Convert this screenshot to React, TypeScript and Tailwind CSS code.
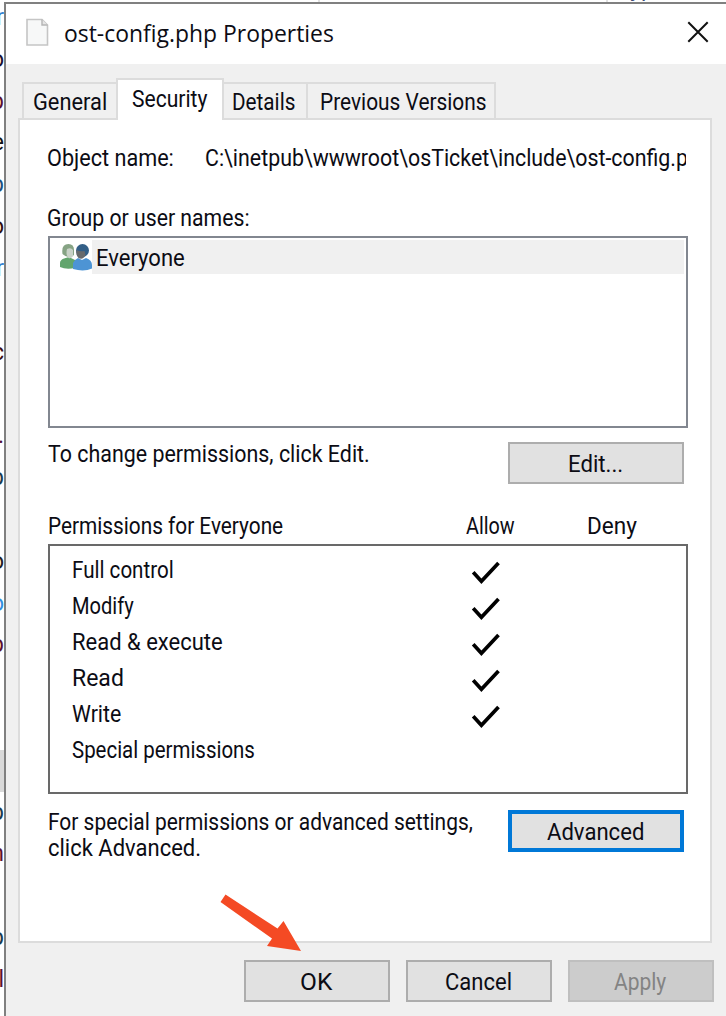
import { useLayoutEffect, useRef, useState } from "react";

type LabelProps = { text: string; width: number; className?: string };

/* Single-line label condensed or widened to an exact width. */
function Label({ text, width, className = "" }: LabelProps) {
  const ref = useRef<HTMLSpanElement>(null);
  const [scale, setScale] = useState(1);
  useLayoutEffect(() => {
    if (ref.current) setScale(width / ref.current.offsetWidth);
  }, [text, width]);
  return (
    <span className={`block shrink-0 ${className}`} style={{ width }}>
      <span
        ref={ref}
        className="inline-block origin-left whitespace-nowrap align-top"
        style={{ transform: `scaleX(${scale})` }}
      >
        {text}
      </span>
    </span>
  );
}

const fragments: { t: string; c: string }[] = [
  { t: "r", c: "text-[#2f7fd0]" },
  { t: "o", c: "text-[#1a1030]" },
  { t: "p", c: "text-[#5a1030]" },
  { t: "e", c: "text-[#111111]" },
  { t: "p", c: "text-[#1a4f80]" },
  { t: "o", c: "text-[#301010]" },
  { t: "r", c: "text-[#2f7fd0]" },
  { t: "", c: "" },
  { t: "c", c: "text-[#3a0a10]" },
  { t: "", c: "" },
  { t: ".", c: "text-[#50103a]" },
  { t: "p", c: "text-[#1a3a50]" },
  { t: "", c: "" },
  { t: "o", c: "text-[#222222]" },
  { t: "o", c: "text-[#2f8fe0]" },
  { t: "p", c: "text-[#5a1030]" },
  { t: "", c: "" },
  { t: "", c: "" },
  { t: "", c: "bg-[#d9d9d9]" },
  { t: "p", c: "text-[#1a3a50]" },
  { t: "n", c: "text-[#5a1030]" },
  { t: "", c: "" },
  { t: "p", c: "text-[#1a3a50]" },
  { t: "sl", c: "text-[#5a1030]" },
];

const permissions = [
  { name: "Full control", w: 102, allow: true },
  { name: "Modify", w: 62, allow: true },
  { name: "Read & execute", w: 151, allow: true },
  { name: "Read", w: 52, allow: true },
  { name: "Write", w: 49, allow: true },
  { name: "Special permissions", w: 183, allow: false },
];

function Check() {
  return (
    <svg className="ml-[398px] h-[36px] w-[32px] shrink-0" viewBox="0 0 32 36" fill="none">
      <path d="M3.2 14.3 L11.4 23.2 L28.5 5" stroke="#000" strokeWidth="3.7" />
    </svg>
  );
}

function Users() {
  return (
    <svg className="h-[30px] w-[34px] shrink-0" viewBox="0 0 34 30">
      <path d="M2 26V21Q2 18 6 16.5L11 15L17 18V26Q8 28 2 25Z" fill="#62a56d" />
      <path d="M4.5 12Q3 2 10.5 2Q16 2 16 8V13Q11 18 4.5 12Z" fill="#86a384" />
      <path d="M9 7Q13 5 15 8V14Q13 17 10.5 16Q7.500 13 9 7Z" fill="#c9d2c8" />
      <path d="M15 27V21Q16 18 20 16L24 18L28 16Q34 18 34 23V26.500Q26 30 15 27Z" fill="#4d94d4" />
      <ellipse cx="24.500" cy="8.500" rx="6.500" ry="6.500" fill="#335f87" />
      <path d="M18.500 8Q22 10 26.500 9L27.500 13Q25 18.500 20.500 16Q17.500 13 18.500 8Z" fill="#686a6c" />
    </svg>
  );
}

const button = "flex h-[42px] items-start justify-center border-2";

export default function App() {
  return (
    <div className="flex h-[1016px] w-[726px] flex-col overflow-hidden bg-white font-['Roboto',sans-serif] text-[23px] leading-[26px] text-[#0c0c14]">
      <div className="flex h-[2px] shrink-0 overflow-hidden">
        <div className="ml-[318px] h-full w-[2px] bg-[#e2e2e2]" />
        <div className="ml-[286px] h-full w-[2px] bg-[#e2e2e2]" />
        <div className="-mt-[24px] ml-[22px] h-[26px] text-[#3c4c78]">yp</div>
      </div>
      <div className="flex min-h-0 flex-1">
        <div className="flex w-[4px] shrink-0 flex-col overflow-hidden">
          <div className="-mt-[5px] flex flex-col">
            {fragments.map((f, i) => (
              <div key={i} className={`flex h-[41.84px] w-[4px] shrink-0 items-center justify-end ${f.c}`}>
                {f.t}
              </div>
            ))}
          </div>
        </div>
        <div className="flex w-[722px] shrink-0 flex-col border-l-2 border-t-2 border-[#808080] bg-[#f0f0f0]">
          <header className="flex h-[60px] shrink-0 items-start bg-white">
            <svg className="ml-[19px] mt-[14px] h-[30px] w-[26px]" viewBox="0 0 26 30">
              <path d="M2 1.5H17L22.5 7V27H2Z" fill="#f7f8f8" stroke="#c5c5c5" strokeWidth="1.6" />
              <path d="M17 1.5V7H22.5" fill="#e5e5e5" stroke="#b5b5b5" strokeWidth="1.4" />
            </svg>
            <Label
              text="ost-config.php Properties"
              width={270}
              className="ml-[13px] mt-[16px] font-['Open_Sans',sans-serif] text-[23.5px]"
            />
            <svg className="ml-[353px] mt-[17px] h-[22px] w-[22px]" viewBox="0 0 22 22">
              <path d="M1.3 1.3L20.7 20.7M20.7 1.3L1.3 20.7" stroke="#111" strokeWidth="2" />
            </svg>
          </header>

          <nav className="flex h-[54px] shrink-0 items-end pl-[16px]">
            <div className="flex h-[36px] w-[94px] border-l-2 border-t-2 border-[#dcdcdc] pl-[9px] pt-[6px]">
              <Label text="General" width={74} />
            </div>
            <div className="z-10 -mb-[2px] flex h-[42px] w-[108px] border-x-2 border-t-2 border-[#dcdcdc] bg-white pl-[14px] pt-[7px]">
              <Label text="Security" width={75} />
            </div>
            <div className="flex h-[36px] w-[82px] border-t-2 border-[#dcdcdc] pl-[8px] pt-[6px]">
              <Label text="Details" width={63} />
            </div>
            <div className="flex h-[36px] w-[190px] border-x-2 border-t-2 border-[#dcdcdc] pl-[12px] pt-[6px]">
              <Label text="Previous Versions" width={167} />
            </div>
          </nav>

          <main className="ml-[12px] flex h-[825px] w-[694px] shrink-0 flex-col border-2 border-[#dcdcdc] bg-white pl-[28px] pt-[26px]">
            <div className="flex h-[26px] shrink-0">
              <Label text="Object name:" width={127} className="-ml-[1px]" />
              <div className="ml-[31px] flex w-[481px] overflow-hidden">
                <Label text="C:\inetpub\wwwroot\osTicket\include\ost-config.php" width={507} />
              </div>
            </div>

            <Label text="Group or user names:" width={203} className="-ml-[1px] mt-[34px]" />
            <div className="mt-[4px] h-[192px] w-[640px] shrink-0 border-2 border-[#828790] p-[2px]">
              <div className="flex h-[34px]">
                <div className="flex w-[40px] items-center justify-end">
                  <Users />
                </div>
                <div className="flex flex-1 bg-[#f0f0f0] pl-[4px] pt-[6px]">
                  <Label text="Everyone" width={89} />
                </div>
              </div>
            </div>

            <div className="mt-[14px] flex h-[42px] w-[636px] shrink-0 justify-between">
              <Label text="To change permissions, click Edit." width={322} />
              <div className={`${button} w-[176px] border-[#adadad] bg-[#e1e1e1] pt-[8px]`}>
                <Label text="Edit..." width={55} className="-ml-[2px]" />
              </div>
            </div>

            <div className="mt-[30px] flex h-[26px] shrink-0">
              <Label text="Permissions for Everyone" width={235} />
              <Label text="Allow" width={49} className="ml-[183px]" />
              <Label text="Deny" width={50} className="ml-[72px]" />
            </div>
            <div className="mt-[4px] h-[250px] w-[640px] shrink-0 border-2 border-[#696969] pl-[22px] pt-[12px]">
              {permissions.map((p) => (
                <div key={p.name} className="flex h-[36px]">
                  <div className="w-0">
                    <Label text={p.name} width={p.w} />
                  </div>
                  {p.allow && <Check />}
                </div>
              ))}
            </div>

            <div className="mt-[16px] flex w-[636px] justify-between">
              <div>
                <Label text="For special permissions or advanced settings," width={425} />
                <Label text="click Advanced." width={153} />
              </div>
              <div className={`${button} w-[176px] border-[4px] border-[#0078d7] bg-[#e1e1e1] pt-[6px]`}>
                <Label text="Advanced" width={97} className="-ml-[2px]" />
              </div>
            </div>
          </main>

          <footer className="relative flex gap-[16px] pl-[238px] pt-[17px]">
            <svg className="absolute left-[213px] top-[-50px] h-[62px] w-[86px]" viewBox="0 0 86 62">
              <path d="M6.5 1.5L58.5 35.5L64.5 28L82 58L48 53L53 45.5L1.5 9Z" fill="#f44a24" />
            </svg>
            <div className={`${button} w-[146px] border-[#adadad] bg-[#e1e1e1] pt-[8px]`}>
              <Label text="OK" width={32} className="-ml-[2px]" />
            </div>
            <div className={`${button} w-[146px] border-[#adadad] bg-[#e1e1e1] pt-[8px]`}>
              <Label text="Cancel" width={67} className="-ml-[2px]" />
            </div>
            <div className={`${button} w-[146px] border-[#bfbfbf] bg-[#cccccc] pt-[8px] text-[#838383]`}>
              <Label text="Apply" width={52} className="-ml-[3px]" />
            </div>
          </footer>
        </div>
      </div>
    </div>
  );
}
